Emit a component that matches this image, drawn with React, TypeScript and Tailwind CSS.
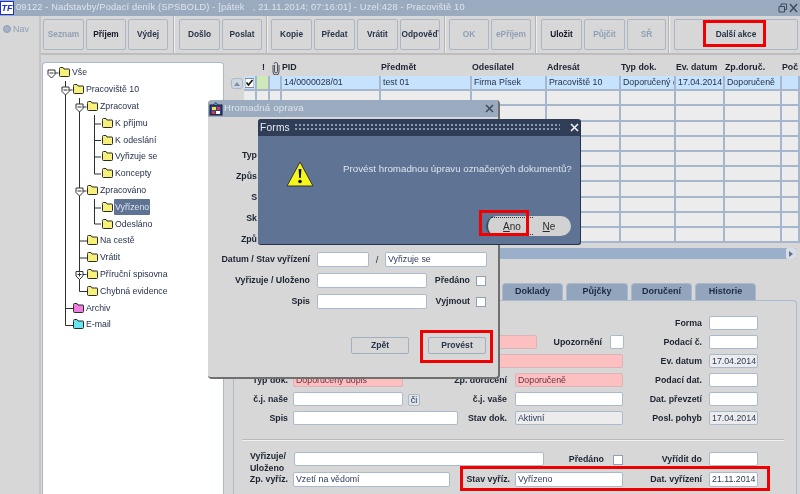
import React from "react";

function Lab({ w, children }: { w: string; children: React.ReactNode }) {
  return <div className={`${w} shrink-0 text-right font-bold text-[8.8px] leading-[14px] text-[#1c2433] whitespace-nowrap`}>{children}</div>;
}

function Inp({ w, tone = "white", children, cls = "" }: { w: string; tone?: "white" | "pink" | "gray"; children?: React.ReactNode; cls?: string }) {
  const t =
    tone === "pink"
      ? "bg-[#fcc0c0] border-[#dcb4b8] text-[#6a3040]"
      : tone === "gray"
      ? "bg-[#ececec] border-[#a9b9ce] text-[#2c3a5c]"
      : "bg-white border-[#a9b9ce] text-[#2c3a5c]";
  return (
    <div className={`${w} ${t} ${cls} h-full shrink-0 border rounded-[2px] px-[2px] text-[8.8px] leading-[12px] whitespace-nowrap overflow-hidden`}>{children}</div>
  );
}

function TbBtn({ w, label, off, bold }: { w: string; label: string; off?: boolean; bold?: boolean }) {
  return (
    <div
      className={`${w} h-[31px] shrink-0 border border-[#aab6c6] rounded-[2px] flex items-center justify-center text-[8.3px] font-bold ${
        off ? "text-[#8f9fb6]" : bold ? "text-[#111827]" : "text-[#28344a]"
      }`}
    >
      {label}
    </div>
  );
}

function Sep({ cls }: { cls: string }) {
  return <div className={`${cls} w-[2px] h-[37px] -mt-[3px] shrink-0 border-l border-[#b4b4b4] bg-[#ededed]`} />;
}

function Folder({ color = "#f7f17c" }: { color?: string }) {
  return (
    <svg width="11" height="10" viewBox="0 0 11 10" className="shrink-0">
      <path d="M0.5 2.5 L0.5 1.5 Q0.5 0.5 1.5 0.5 L4 0.5 L5 2 L10 2 Q10.5 2 10.5 2.5 L10.5 8.5 Q10.5 9.5 9.5 9.5 L1.5 9.5 Q0.5 9.5 0.5 8.5 Z" fill={color} stroke="#2b2b2b" strokeWidth="1" />
    </svg>
  );
}

const treeRows: { t: string; pl: string; color?: string; sel?: boolean }[] = [
  { t: "Vše", pl: "pl-[16px]" },
  { t: "Pracoviště 10", pl: "pl-[30px]" },
  { t: "Zpracovat", pl: "pl-[44px]" },
  { t: "K příjmu", pl: "pl-[59px]" },
  { t: "K odeslání", pl: "pl-[59px]" },
  { t: "Vyřizuje se", pl: "pl-[59px]" },
  { t: "Koncepty", pl: "pl-[59px]" },
  { t: "Zpracováno", pl: "pl-[44px]" },
  { t: "Vyřízeno", pl: "pl-[59px]", sel: true },
  { t: "Odesláno", pl: "pl-[59px]" },
  { t: "Na cestě", pl: "pl-[44px]" },
  { t: "Vrátit", pl: "pl-[44px]" },
  { t: "Příruční spisovna", pl: "pl-[44px]" },
  { t: "Chybná evidence", pl: "pl-[44px]" },
  { t: "Archiv", pl: "pl-[30px]", color: "#f07ee0" },
  { t: "E-mail", pl: "pl-[30px]", color: "#66e6f0" },
];

function TreeLines() {
  const node = (x: number, y: number, plus?: boolean) => (
    <g key={`${x}-${y}`}>
      <path d={`M${x - 3.5} ${y - 3.5} H${x + 3.5} V${y + 1} L${x} ${y + 4.5} L${x - 3.5} ${y + 1} Z`} fill="#fff" stroke="#333" strokeWidth="1" />
      <path d={`M${x - 2} ${y - 0.5} H${x + 2}`} stroke="#333" strokeWidth="1" />
      {plus && <path d={`M${x} ${y - 2.5} V${y + 1.5}`} stroke="#333" strokeWidth="1" />}
      <path d={`M${x + 3.5} ${y - 0.5} H${x + 7}`} stroke="#333" strokeWidth="1" />
    </g>
  );
  return (
    <svg width="180" height="280" viewBox="0 0 180 280" className="absolute -left-px top-0 pointer-events-none">
      <g stroke="#2e2e2e" strokeWidth="1" fill="none">
        <path d="M23.5 18 V262.5 H31" />
        <path d="M23.5 245.5 H31" />
        <path d="M37.5 35 V228.5 H45" />
        <path d="M37.5 178 H45" />
        <path d="M37.5 195 H45" />
        <path d="M52.5 52 V111 H59" />
        <path d="M52.5 61 H59" />
        <path d="M52.5 77.5 H59" />
        <path d="M52.5 94 H59" />
        <path d="M52.5 136 V161 H59" />
        <path d="M52.5 145 H59" />
      </g>
      {node(9.5, 10.5)}
      {node(23.5, 27.5)}
      {node(37.5, 44.5)}
      {node(37.5, 128.5)}
      {node(37.5, 212, true)}
    </svg>
  );
}

const colW = ["w-[13px]", "w-[13px]", "w-[12px]", "w-[99px]", "w-[91px]", "w-[75px]", "w-[74px]", "w-[55px]", "w-[49px]", "w-[57px]", "w-[18px]"];
const heads = ["", "!", "", "PID", "Předmět", "Odesílatel", "Adresát", "Typ dok.", "Ev. datum", "Zp.doruč.", "Poč"];
const row1 = ["", "", "", "14/0000028/01", "test 01", "Firma Písek", "Pracoviště 10", "Doporučený dopis", "17.04.2014", "Doporučeně", ""];

function Grid() {
  return (
    <div className="flex flex-col">
      {Array.from({ length: 11 }).map((_, r) => (
        <div key={r} className="flex h-[15.2px]">
          {colW.map((w, c) => (
            <div
              key={c}
              className={`${w} shrink-0 border-r-2 border-b-2 border-[#a6b6cc] px-[2px] text-[8.8px] leading-[13px] text-[#26324c] whitespace-nowrap overflow-hidden ${
                r === 0 ? (c === 1 ? "bg-[#cfe8b8]" : "bg-[#c6e2fc]") : "bg-[#ececec]"
              }`}
            >
              {r === 0 && c === 0 ? (
                <svg width="9" height="10" viewBox="0 0 9 10" className="-ml-px mt-[2px]">
                  <rect x="0" y="0.5" width="9" height="9" fill="#fff" stroke="#7f8a9a" />
                  <path d="M1.5 4.5 L3.5 7 L7.5 2" stroke="#111" strokeWidth="1.6" fill="none" />
                </svg>
              ) : r === 0 ? (
                row1[c]
              ) : null}
            </div>
          ))}
        </div>
      ))}
    </div>
  );
}

function Tab({ w, t }: { w: string; t: string }) {
  return (
    <div className={`${w} h-[17px] rounded-t-[4px] bg-[#93a5bd] border border-b-0 border-[#a9b9ce] flex items-center justify-center font-bold text-[9px] text-[#1e2a40]`}>
      {t}
    </div>
  );
}

function Row({ children, cls = "h-[14px] mb-[5px]" }: { children: React.ReactNode; cls?: string }) {
  return <div className={`flex ${cls}`}>{children}</div>;
}

function Form() {
  return (
    <div className="flex-1 ml-[9px] mr-[3px] border-l border-t border-r border-[#a9b9ce] rounded-tr-[4px] pt-[15px]">
      <Row>
        <div className="w-[389px] shrink-0" />
        <Lab w="w-[79px]">Forma</Lab>
        <Inp w="w-[49px]" cls="ml-[7px]" />
      </Row>
      <Row>
        <div className="w-[54px] shrink-0" />
        <Inp w="w-[244px]" tone="pink" cls="ml-[5px]" />
        <Lab w="w-[65px]">Upozornění</Lab>
        <Inp w="w-[14px]" cls="ml-[8px]" />
        <Lab w="w-[78px]">Podací č.</Lab>
        <Inp w="w-[49px]" cls="ml-[7px]" />
      </Row>
      <Row>
        <div className="w-[54px] shrink-0" />
        <Inp w="w-[330px]" tone="pink" cls="ml-[5px]" />
        <Lab w="w-[79px]">Ev. datum</Lab>
        <Inp w="w-[49px]" tone="gray" cls="ml-[7px]">17.04.2014</Inp>
      </Row>
      <Row>
        <Lab w="w-[54px]">Typ dok.</Lab>
        <Inp w="w-[110px]" tone="pink" cls="ml-[5px]">Doporučený dopis</Inp>
        <Lab w="w-[104px]">Zp. doručení</Lab>
        <Inp w="w-[108px]" tone="pink" cls="ml-[8px]">Doporučeně</Inp>
        <Lab w="w-[79px]">Podací dat.</Lab>
        <Inp w="w-[49px]" cls="ml-[7px]" />
      </Row>
      <Row cls="h-[14px] mb-[5px] mt-px">
        <Lab w="w-[54px]">č.j. naše</Lab>
        <Inp w="w-[110px]" cls="ml-[5px]" />
        <div className="w-[12px] h-[12px] ml-[5px] mt-[2px] shrink-0 border border-[#a9b9ce] rounded-[2px] bg-[#dfe3e8] text-center text-[9px] leading-[10px] text-[#26324c]">či</div>
        <Lab w="w-[87px]">č.j. vaše</Lab>
        <Inp w="w-[108px]" cls="ml-[8px]" />
        <Lab w="w-[79px]">Dat. převzetí</Lab>
        <Inp w="w-[49px]" cls="ml-[7px]" />
      </Row>
      <Row cls="h-[14px]">
        <Lab w="w-[54px]">Spis</Lab>
        <Inp w="w-[165px]" cls="ml-[5px]" />
        <Lab w="w-[49px]">Stav dok.</Lab>
        <Inp w="w-[108px]" tone="gray" cls="ml-[8px]">Aktivní</Inp>
        <Lab w="w-[79px]">Posl. pohyb</Lab>
        <Inp w="w-[49px]" tone="gray" cls="ml-[7px]">17.04.2014</Inp>
      </Row>
      <div className="h-[2px] mt-[14px] ml-[8px] mr-[12px] bg-[#f0f0f0] border-t border-[#b8b8b8]" />
      <Row cls="h-[14px] mt-[11px] mb-[6px]">
        <div className="w-[54px] pl-[16px] -mt-[2px] shrink-0 font-bold text-[8.8px] leading-[12px] text-[#1c2433] whitespace-nowrap">
          Vyřizuje/
          <br />
          Uloženo
        </div>
        <Inp w="w-[250px]" cls="ml-[6px]" />
        <Lab w="w-[60px]">Předáno</Lab>
        <div className="w-[10px] h-[10px] ml-[9px] mt-[3px] shrink-0 bg-white border border-[#8fa0b8]" />
        <Lab w="w-[79px]">Vyřídit do</Lab>
        <Inp w="w-[49px]" cls="ml-[7px]" />
      </Row>
      <Row cls="h-[15px]">
        <Lab w="w-[54px]">Zp. vyříz.</Lab>
        <Inp w="w-[157px]" cls="ml-[5px]">Vzetí na vědomí</Inp>
        <Lab w="w-[60px]">Stav vyříz.</Lab>
        <Inp w="w-[108px]" cls="ml-[5px]">Vyřízeno</Inp>
        <Lab w="w-[79px]">Dat. vyřízení</Lab>
        <Inp w="w-[49px]" cls="ml-[7px]">21.11.2014</Inp>
      </Row>
    </div>
  );
}

function DlgRow({ label, children, lw = "w-[102px]" }: { label: string; children?: React.ReactNode; lw?: string }) {
  return (
    <div className="flex h-[15px] mb-[6px]">
      <Lab w={lw}>{label}</Lab>
      {children}
    </div>
  );
}

function BulkDialog() {
  return (
    <div className="absolute left-[208px] top-[100px] w-[292px] h-[279px] bg-[#d7d7d7] rounded-[4px] border-r-2 border-b-2 border-[#6f6f6f] overflow-hidden">
      <div className="h-[17px] bg-[#9aaabf] flex items-center pr-[3px] text-[9.6px] text-[#dfe5ec]">
        <svg width="14" height="14" viewBox="0 0 14 14" className="shrink-0 ml-px">
          <rect x="1" y="3" width="12" height="10" fill="#2b3f9e" stroke="#1b1b1b" />
          <rect x="3" y="5" width="4" height="3" fill="#f2e23a" />
          <rect x="8" y="5" width="3" height="3" fill="#e0352b" />
          <rect x="3" y="9" width="3" height="3" fill="#e0352b" />
          <rect x="7" y="9" width="4" height="3" fill="#fff" />
          <path d="M4 3 L7 0.5 L9 3" fill="#30a0d0" stroke="#1b1b1b" strokeWidth="0.6" />
        </svg>
        <span className="ml-px tracking-[0.2px]">Hromadná oprava</span>
        <svg width="9" height="9" viewBox="0 0 9 9" className="ml-auto mr-[1px]">
          <path d="M1 1 L8 8 M8 1 L1 8" stroke="#3e4a5c" strokeWidth="1.5" />
        </svg>
      </div>
      <div className="pt-[30px]">
        <div className="h-[105px] pt-px">
          <DlgRow label="Typ" lw="w-[49px]" />
          <DlgRow label="Způs" lw="w-[49px]" />
          <DlgRow label="S" lw="w-[49px]" />
          <DlgRow label="Sk" lw="w-[49px]" />
          <DlgRow label="Způ" lw="w-[49px]" />
        </div>
        <DlgRow label="Datum / Stav vyřízení">
          <Inp w="w-[52px]" cls="ml-[7px]" />
          <div className="w-[16px] text-center text-[9.5px] leading-[15px] text-[#26324c]">/</div>
          <Inp w="w-[102px]">Vyřizuje se</Inp>
        </DlgRow>
        <DlgRow label="Vyřizuje / Uloženo">
          <Inp w="w-[110px]" cls="ml-[7px]" />
          <Lab w="w-[43px]">Předáno</Lab>
          <div className="w-[10px] h-[10px] ml-[6px] mt-[3px] shrink-0 bg-white border border-[#8fa0b8]" />
        </DlgRow>
        <DlgRow label="Spis">
          <Inp w="w-[110px]" cls="ml-[7px]" />
          <Lab w="w-[43px]">Vyjmout</Lab>
          <div className="w-[10px] h-[10px] ml-[6px] mt-[3px] shrink-0 bg-white border border-[#8fa0b8]" />
        </DlgRow>
        <div className="flex justify-end gap-[19px] pr-[12px] mt-[28px]">
          <div className="w-[58px] h-[17px] border border-[#a0aebf] rounded-[2px] flex items-center justify-center font-bold text-[8.6px] text-[#28344a]">Zpět</div>
          <div className="w-[58px] h-[17px] border border-[#a0aebf] rounded-[2px] flex items-center justify-center font-bold text-[8.6px] text-[#28344a]">Provést</div>
        </div>
      </div>
    </div>
  );
}

function FormsAlert() {
  return (
    <div className="absolute left-[258px] top-[119px] w-[323px] h-[126px] bg-[#5f7394] rounded-[3px] border-r border-b border-[#26324a] flex flex-col">
      <div className="h-[17px] bg-[#2f3e56] rounded-t-[3px] flex items-center text-[10.2px] text-[#e6ebf2] shrink-0">
        <span className="ml-[2px] tracking-[0.2px]">Forms</span>
        <div className="ml-[4px] w-[266px] h-[9px] bg-[radial-gradient(#8c9bb0_0.8px,transparent_1px)] bg-size-[4px_4px]" />
        <svg width="9" height="9" viewBox="0 0 9 9" className="ml-[10px]">
          <path d="M1 1 L8 8 M8 1 L1 8" stroke="#f2f4f8" strokeWidth="1.6" />
        </svg>
      </div>
      <div className="flex pt-[25px] pl-[28px] h-[80px] shrink-0">
        <svg width="28" height="27" viewBox="0 0 28 27" className="shrink-0">
          <path d="M14 1 L27 25 H1 Z" fill="#f6f61a" stroke="#333" strokeWidth="1" strokeLinejoin="round" />
          <path d="M12.6 8 H15.4 L14.8 17 H13.2 Z" fill="#111" />
          <circle cx="14" cy="20.5" r="1.8" fill="#111" />
        </svg>
        <div className="ml-[29px] mt-px text-[9.75px] leading-[13px] text-[#dde4ee] whitespace-nowrap">Provést hromadnou úpravu označených dokumentů?</div>
      </div>
      <div className="ml-[228px] w-[85px] h-[20px] bg-[#d2d2d2] rounded-[10px] border-l-2 border-[#3a4a60] flex text-[10px] text-[#2c2c2c]">
        <div className="w-[42px] my-[1px] ml-[3px] border-y border-dotted border-[#333] flex items-center justify-center">
          <span><span className="underline">A</span>no</span>
        </div>
        <div className="flex-1 pr-[6px] flex items-center justify-center">
          <span><span className="underline">N</span>e</span>
        </div>
      </div>
    </div>
  );
}

export default function App() {
  return (
    <div className="relative w-[800px] h-[494px] overflow-hidden bg-[#d7d7d7] flex flex-col font-['Liberation_Sans',sans-serif] blur-[0.4px]">
      {/* Title bar */}
      <div className="h-[16px] shrink-0 bg-[#9aaabf] flex items-center text-[9.3px] text-[#dfe5ec]">
        <div className="w-[14px] h-[14px] shrink-0 bg-white border border-[#1a2fd0] text-[#1a2fd0] text-[9px] font-bold italic leading-[12px] text-center">TF</div>
        <span className="ml-[2px] whitespace-pre tracking-[0.15px]">09122 - Nadstavby/Podací deník (SPSBOLD) - [pátek   , 21.11.2014; 07:16:01] - Uzel:428 - Pracoviště 10</span>
        <svg width="20" height="10" viewBox="0 0 20 10" className="ml-auto mr-[2px]">
          <path d="M1 3.5 H6.5 V9 H1 Z M3 3 V1 H8.5 V6.5 H7" stroke="#3e4a5c" fill="none" />
          <path d="M12 1 L19 9 M19 1 L12 9" stroke="#3e4a5c" strokeWidth="1.4" />
        </svg>
      </div>

      <div className="flex flex-1 min-h-0">
        {/* Nav strip */}
        <div className="w-[41px] shrink-0 border-r-2 border-[#c4c4c4] pt-[8px] pl-[3px] flex items-start gap-[2px] text-[9px] text-[#8f9fb6]">
          <span className="w-[8px] h-[8px] mt-[1px] rounded-full bg-[#a4b2c4] border border-[#8f9fb6]" />
          <span className="leading-[10px]">Nav</span>
        </div>

        <div className="flex-1 flex flex-col min-w-0">
          {/* Toolbar */}
          <div className="h-[39px] shrink-0 border-b-2 border-[#bdbdbd] pt-[3px] pl-[2px] flex gap-[2px]">
            <TbBtn w="w-[41px]" label="Seznam" off />
            <TbBtn w="w-[40px]" label="Příjem" bold />
            <TbBtn w="w-[40px]" label="Výdej" />
            <Sep cls="ml-[3px] mr-[2px]" />
            <TbBtn w="w-[41px]" label="Došlo" />
            <TbBtn w="w-[40px]" label="Poslat" />
            <Sep cls="ml-[2px] mr-px" />
            <TbBtn w="w-[41px]" label="Kopie" />
            <TbBtn w="w-[41px]" label="Předat" />
            <TbBtn w="w-[41px]" label="Vrátit" />
            <TbBtn w="w-[40px]" label="Odpověď" />
            <Sep cls="ml-[2px] mr-px" />
            <TbBtn w="w-[40px]" label="OK" off />
            <TbBtn w="w-[40px]" label="ePříjem" off />
            <Sep cls="ml-[2px] mr-[2px]" />
            <TbBtn w="w-[41px]" label="Uložit" bold />
            <TbBtn w="w-[41px]" label="Půjčit" off />
            <TbBtn w="w-[39px]" label="SŘ" off />
            <Sep cls="mr-[2px]" />
            <TbBtn w="w-[124px]" label="Další akce" />
          </div>

          <div className="flex flex-1 min-h-0">
            {/* Tree */}
            <div className="relative w-[182px] ml-px mt-[7px] shrink-0 bg-white rounded-t-[4px] border-l border-t border-r border-[#a9b9ce] pt-px text-[8.75px] text-[#26324c]">
              <TreeLines />
              {treeRows.map((r) => (
                <div key={r.t} className={`relative h-[16.8px] flex items-center ${r.pl}`}>
                  <Folder color={r.color} />
                  <span className={`ml-px px-px whitespace-nowrap leading-[16px] rounded-[1px] ${r.sel ? "bg-[#5f7394] text-[#dde4ee]" : ""}`}>{r.t}</span>
                </div>
              ))}
            </div>

            {/* Right part */}
            <div className="flex-1 flex flex-col min-w-0">
              <div className="relative pl-[20px] pt-[6px]">
                <div className="flex h-[15px]">
                  {heads.map((h, i) => (
                    <div key={i} className={`${colW[i]} shrink-0 font-bold text-[8.8px] leading-[13px] text-[#1c2433] whitespace-nowrap ${i === 1 ? "pl-[5px]" : ""}`}>
                      {i === 2 ? (
                        <svg width="8" height="14" viewBox="0 0 8 14" className="ml-[2px]">
                          <path d="M2.5 4 V10.5 A1.5 1.5 0 0 0 5.5 10.5 V2.8 A1.8 1.8 0 0 0 2 2.8 M1 4 V11 A3 3 0 0 0 7 11 V4" fill="none" stroke="#3a4252" strokeWidth="0.9" />
                        </svg>
                      ) : (
                        h
                      )}
                    </div>
                  ))}
                </div>
                <Grid />
                {/* Vertical scroll arrow */}
                <div className="absolute left-[7px] top-[23px] w-[12px] h-[11px] rounded-[3px] bg-[#cfd6e0] border border-[#a9b9ce] flex items-center justify-center">
                  <span className="w-0 h-0 border-l-[3px] border-r-[3px] border-b-[4px] border-l-transparent border-r-transparent border-b-[#7f8fa6]" />
                </div>
              </div>
              {/* Horizontal scroll */}
              <div className="h-[11px] mt-[5px] ml-[20px] mr-[4px] bg-[#9aafca] flex justify-end">
                <div className="w-[10px] h-[11px] bg-[#d9dee6] rounded-[2px] flex items-center justify-center">
                  <span className="w-0 h-0 border-t-[3px] border-b-[3px] border-l-[4px] border-t-transparent border-b-transparent border-l-[#5f7394]" />
                </div>
              </div>
              {/* Tabs */}
              <div className="mt-[24px] pr-[44px] flex justify-end gap-[3px]">
                <Tab w="w-[61px]" t="Doklady" />
                <Tab w="w-[62px]" t="Půjčky" />
                <Tab w="w-[61px]" t="Doručení" />
                <Tab w="w-[61px]" t="Historie" />
              </div>
              <Form />
            </div>
          </div>
        </div>
      </div>

      <BulkDialog />
      <FormsAlert />

      {/* Red highlight boxes */}
      <div className="absolute left-[703px] top-[20px] w-[63px] h-[27px] border-[3px] border-[#f00000]" />
      <div className="absolute left-[479px] top-[210px] w-[50px] h-[26px] border-[3px] border-[#f00000]" />
      <div className="absolute left-[420px] top-[330px] w-[73px] h-[33px] border-[3px] border-[#f00000]" />
      <div className="absolute left-[460px] top-[466px] w-[310px] h-[25px] border-[3px] border-[#f00000]" />
    </div>
  );
}
